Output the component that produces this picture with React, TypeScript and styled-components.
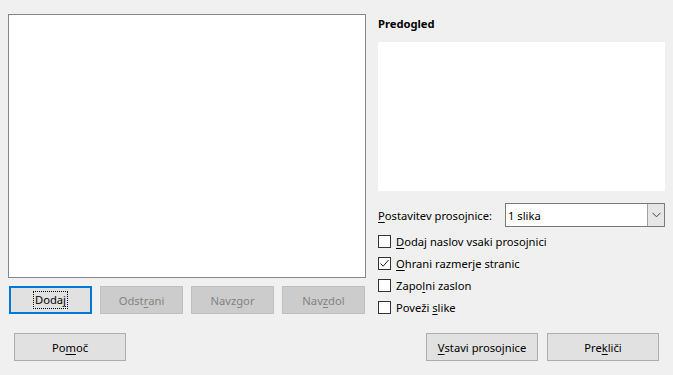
import React from "react";
import styled, { createGlobalStyle } from "styled-components";

const Global = createGlobalStyle`
  html, body { margin: 0; padding: 0; background: #f0f0f0; }
  * { box-sizing: border-box; }
`;

const Dialog = styled.div`
  width: 673px;
  height: 375px;
  background: #f0f0f0;
  font-family: "Noto Sans", "Open Sans", "Liberation Sans", sans-serif;
  font-size: 11.2px;
  color: #000;
  display: flex;
  flex-direction: column;
  overflow: hidden;
`;

const Top = styled.div`
  display: flex;
  align-items: flex-start;
  height: 314px;
  padding: 14px 0 0 8px;
`;

const LeftCol = styled.div`
  width: 358px;
  display: flex;
  flex-direction: column;
  gap: 8px;
`;

const ListBox = styled.div`
  width: 358px;
  height: 264px;
  background: #fff;
  border: 1px solid #828790;
`;

const ButtonRow = styled.div`
  display: flex;
  gap: 8px;
  padding-left: 1px;
`;

const Button = styled.button<{ $w?: number; $h?: number; $focus?: boolean }>`
  width: ${(p) => p.$w ?? 83}px;
  height: ${(p) => p.$h ?? 28}px;
  font-family: inherit;
  font-size: inherit;
  padding: 0;
  margin: 0;
  display: flex;
  align-items: center;
  justify-content: center;
  color: #000;
  background: #e1e1e1;
  border: ${(p) => (p.$focus ? "2px solid #0078d7" : "1px solid #adadad")};
  &:disabled {
    background: #cccccc;
    border-color: #bfbfbf;
    color: #838383;
  }
`;

const Focus = styled.span`
  border: 1px dotted #000;
  padding: 0 1px;
  line-height: 16px;
`;

const U = styled.span`
  text-decoration: underline;
  text-underline-offset: 2px;
`;

const RightCol = styled.div`
  margin-left: 12px;
  width: 287px;
  display: flex;
  flex-direction: column;
`;

const Heading = styled.div`
  font-weight: bold;
  line-height: 16px;
  margin-top: 2px;
  height: 26px;
`;

const Preview = styled.div`
  width: 287px;
  height: 149px;
  background: #fff;
`;

const LayoutRow = styled.div`
  display: flex;
  align-items: center;
  margin-top: 12px;
  height: 24px;
`;

const Label = styled.div`
  width: 127px;
`;

const Select = styled.div`
  flex: 1;
  height: 24px;
  background: #fff;
  border: 1px solid #7a7a7a;
  display: flex;
  align-items: center;
`;

const SelectText = styled.div`
  flex: 1;
  padding-left: 2px;
`;

const SelectBtn = styled.div`
  width: 17px;
  height: 22px;
  background: #e6e6e6;
  border-left: 1px solid #a0a0a0;
  display: flex;
  align-items: center;
  justify-content: center;
`;

const Checks = styled.div`
  display: flex;
  flex-direction: column;
  margin-top: 3px;
`;

const CheckRow = styled.div`
  height: 22px;
  display: flex;
  align-items: center;
  gap: 5px;
`;

const Box = styled.div`
  width: 13px;
  height: 13px;
  background: #fff;
  border: 1px solid #333;
  display: flex;
  align-items: center;
  justify-content: center;
`;

const Bottom = styled.div`
  display: flex;
  align-items: center;
  padding: 19px 0 0 14px;
`;

const Spacer = styled.div`
  flex: 1;
`;

const RightButtons = styled.div`
  display: flex;
  gap: 9px;
  margin-right: 14px;
`;

function Check({ checked, children }: { checked?: boolean; children: React.ReactNode }) {
  return (
    <CheckRow>
      <Box>
        {checked && (
          <svg width="11" height="11" viewBox="0 0 11 11">
            <path d="M1.5 5.5 L4.2 8.2 L9.5 2" fill="none" stroke="#222" strokeWidth="1" />
          </svg>
        )}
      </Box>
      <span>{children}</span>
    </CheckRow>
  );
}

export default function App() {
  return (
    <Dialog>
      <Global />
      <Top>
        <LeftCol>
          <ListBox />
          <ButtonRow>
            <Button $focus>
              <Focus>
                Doda<U>j</U>
              </Focus>
            </Button>
            <Button disabled>
              Odst<U>r</U>ani
            </Button>
            <Button disabled>
              Navz<U>g</U>or
            </Button>
            <Button disabled>
              Nav<U>z</U>dol
            </Button>
          </ButtonRow>
        </LeftCol>
        <RightCol>
          <Heading>Predogled</Heading>
          <Preview />
          <LayoutRow>
            <Label>
              <U>P</U>ostavitev prosojnice:
            </Label>
            <Select>
              <SelectText>1 slika</SelectText>
              <SelectBtn>
                <svg width="9" height="6" viewBox="0 0 9 6">
                  <path d="M0.5 0.8 L4.5 4.8 L8.5 0.8" fill="none" stroke="#444" strokeWidth="1" />
                </svg>
              </SelectBtn>
            </Select>
          </LayoutRow>
          <Checks>
            <Check>
              <U>D</U>odaj naslov vsaki prosojnici
            </Check>
            <Check checked>
              <U>O</U>hrani razmerje stranic
            </Check>
            <Check>
              Zapo<U>l</U>ni zaslon
            </Check>
            <Check>
              Poveži <U>s</U>like
            </Check>
          </Checks>
        </RightCol>
      </Top>
      <Bottom>
        <Button $w={112}>
          Po<U>m</U>oč
        </Button>
        <Spacer />
        <RightButtons>
          <Button $w={112}>
            <U>V</U>stavi prosojnice
          </Button>
          <Button $w={112}>
            Pre<U>k</U>liči
          </Button>
        </RightButtons>
      </Bottom>
    </Dialog>
  );
}
